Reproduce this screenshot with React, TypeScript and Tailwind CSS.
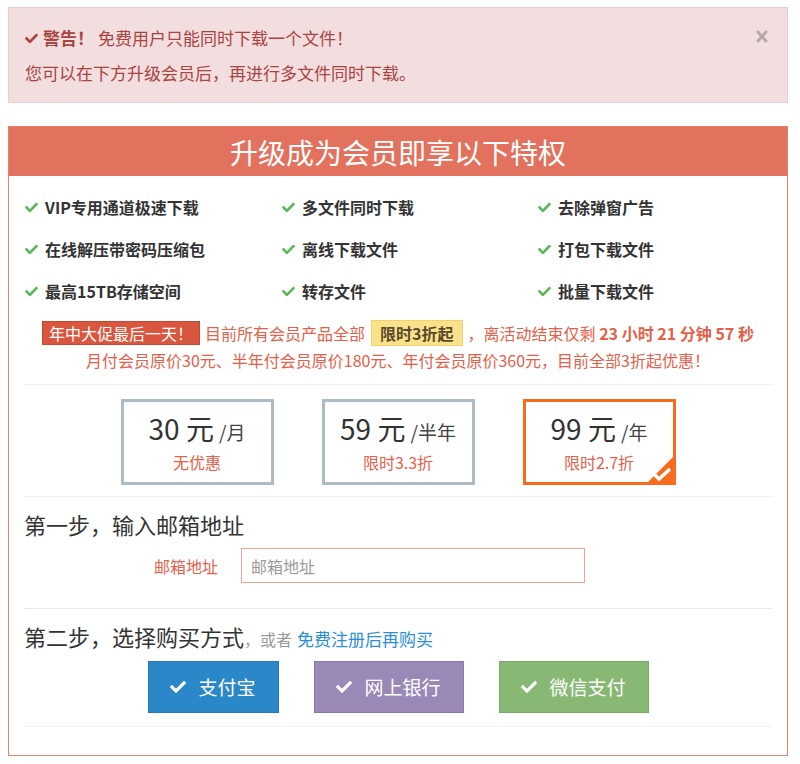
import { FaCheck } from 'react-icons/fa'

const features = [
  'VIP专用通道极速下载', '多文件同时下载', '去除弹窗广告',
  '在线解压带密码压缩包', '离线下载文件', '打包下载文件',
  '最高15TB存储空间', '转存文件', '批量下载文件',
]

const plans = [
  { price: '30', unit: '/月', note: '无优惠', active: false },
  { price: '59', unit: '/半年', note: '限时3.3折', active: false },
  { price: '99', unit: '/年', note: '限时2.7折', active: true },
]

export default function App() {
  return (
    <div
      className="w-[800px] h-[764px] bg-white pt-[7px] pl-2 pr-3 text-[#333]"
      style={{ fontFamily: '"Microsoft YaHei", "Noto Sans CJK SC", "Noto Sans", sans-serif' }}
    >
      {/* warning alert */}
      <div className="relative h-[96px] bg-[#f2dede] border border-[#ebccd1] text-[#a94442] pl-4 pt-[15px]">
        <div className="flex items-center text-[17px] leading-[30px]">
          <FaCheck className="w-[13px] h-[13px] mr-[5px]" />
          <strong className="font-bold mr-1">警告！</strong>
          <span>免费用户只能同时下载一个文件！</span>
        </div>
        <div className="text-[17px] leading-[30px] mt-[5px]">您可以在下方升级会员后，再进行多文件同时下载。</div>
        <svg className="absolute right-[19px] top-[22px]" width="12" height="13" viewBox="0 0 12 13">
          <path d="M2 2 L10 11 M10 2 L2 11" stroke="#b3aaaa" strokeWidth="3" strokeLinecap="round" />
        </svg>
      </div>

      {/* upgrade panel */}
      <div className="mt-[23px] h-[630px] border border-[#e8816e]">
        <div className="h-[49px] bg-[#e2725e] flex items-center justify-center text-white text-[28px]">
          升级成为会员即享以下特权
        </div>

        <div className="px-[15px]">
          <div className="grid grid-cols-[257px_256px_1fr] pt-[10px] pl-[1px]">
            {features.map(f => (
              <div key={f} className="flex items-center h-[42px] text-[16px] font-bold">
                <FaCheck className="w-[13px] h-[13px] text-[#5cb85c] mr-[7px]" />
                <span>{f}</span>
              </div>
            ))}
          </div>

          {/* promo */}
          <div className="mt-[8px] flex items-center justify-center text-[16px] text-[#e4604a]">
            <span className="bg-[#d9573f] border border-[#c24a35] text-white px-[6px] h-[24px] leading-[23px]">年中大促最后一天！</span>
            <span className="ml-[5px]">目前所有会员产品全部</span>
            <span className="ml-[6px] bg-[#fae28c] border border-[#f3d36b] text-[#5b4a2a] px-[8px] h-[26px] leading-[25px] font-bold">限时3折起</span>
            <span className="ml-[5px]">，离活动结束仅剩 <b className="font-bold">23 小时 21 分钟 57 秒</b></span>
          </div>
          <div className="text-center text-[16px] text-[#e4604a] mt-[2px]">
            月付会员原价30元、半年付会员原价180元、年付会员原价360元，目前全部3折起优惠！
          </div>

          <div className="mt-[12px] border-t border-[#f0f0f0]" />

          {/* plans */}
          <div className="flex justify-center gap-[48px] pt-[14px] pb-[11px]">
            {plans.map(p => (
              <div
                key={p.price}
                className={
                  p.active
                    ? 'relative w-[153px] h-[86px] border-[3px] border-[#f96b1c] flex flex-col items-center justify-center'
                    : 'relative w-[153px] h-[86px] border-[3px] border-[#aebbc4] flex flex-col items-center justify-center'
                }
              >
                <div className="flex items-baseline">
                  <span className="text-[28px] leading-none text-[#333]">{p.price} 元</span>
                  <span className="text-[19px] ml-[5px] text-[#444]">{p.unit}</span>
                </div>
                <div className="text-[16px] text-[#e4604a] mt-[8px] leading-none">{p.note}</div>
                {p.active && (
                  <svg className="absolute right-0 bottom-0" width="25" height="25" viewBox="0 0 25 25">
                    <polygon points="25,0 25,25 0,25" fill="#f96b1c" />
                    <path d="M6 17 L11 22 L22 12" stroke="#fff" strokeWidth="3.5" fill="none" />
                  </svg>
                )}
              </div>
            ))}
          </div>

          <div className="border-t border-[#f0f0f0]" />

          {/* step 1 */}
          <div className="text-[22px] mt-[13px] leading-[28px]">第一步，输入邮箱地址</div>
          <div className="flex items-center mt-[10px]">
            <label className="w-[194px] text-right text-[16px] text-[#e4604a]">邮箱地址</label>
            <input
              placeholder="邮箱地址"
              className="ml-[23px] w-[344px] h-[35px] border border-[#f2a394] px-[9px] text-[16px] outline-none placeholder:text-[#999]"
            />
          </div>

          <div className="mt-[25px] border-t border-[#e9e8f6]" />

          {/* step 2 */}
          <div className="flex items-baseline mt-[13px] leading-[28px]">
            <span className="text-[22px]">第二步，选择购买方式</span>
            <span className="text-[16px] text-[#999]">，或者</span>
            <span className="text-[17px] text-[#2a8fd6] ml-[5px]">免费注册后再购买</span>
          </div>
          <div className="flex justify-center gap-[35px] mt-[8px]">
            <button className="w-[131px] h-[52px] bg-[#2a88c8] border border-[#2379b6] text-white text-[19px] flex items-center justify-center">
              <FaCheck className="w-[16px] h-[16px] mr-[12px]" />支付宝
            </button>
            <button className="w-[150px] h-[52px] bg-[#9a88b7] border border-[#8c79ab] text-white text-[19px] flex items-center justify-center">
              <FaCheck className="w-[16px] h-[16px] mr-[12px]" />网上银行
            </button>
            <button className="w-[150px] h-[52px] bg-[#87b874] border border-[#7aab67] text-white text-[19px] flex items-center justify-center">
              <FaCheck className="w-[16px] h-[16px] mr-[12px]" />微信支付
            </button>
          </div>

          <div className="mt-[13px] border-t border-[#f0f0f0]" />
        </div>
      </div>
    </div>
  )
}
